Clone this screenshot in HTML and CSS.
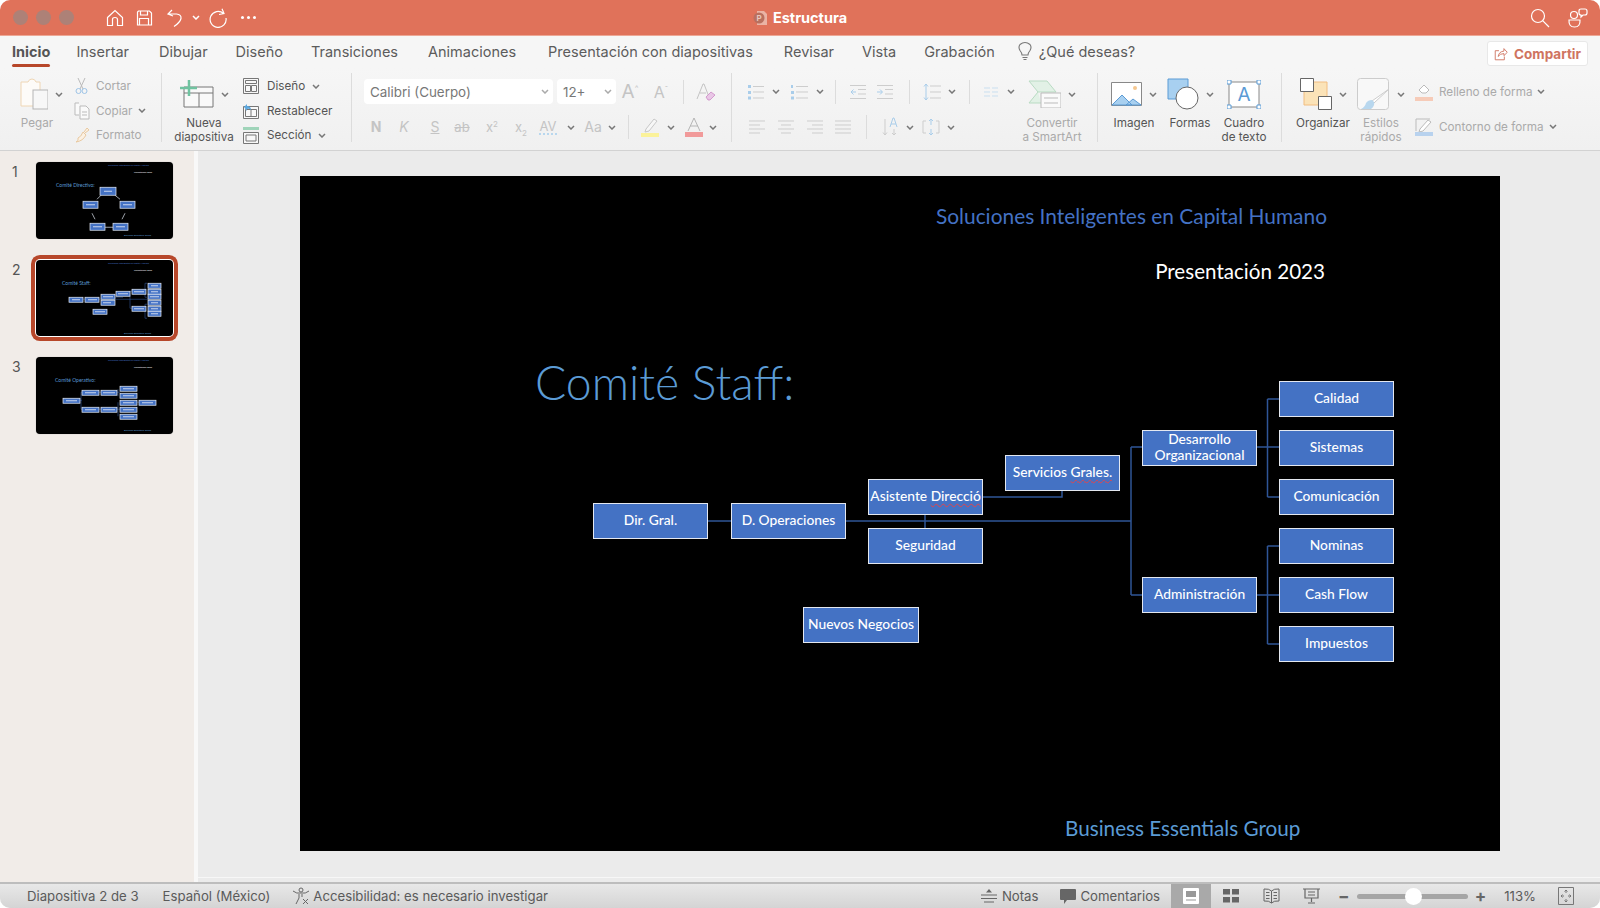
FILE: index.html
```html
<!DOCTYPE html>
<html lang="es">
<head>
    <meta charset="UTF-8">
    <title>Estructura</title>
    <link rel="stylesheet" href="styles.css">
</head>
<body>
<svg class="defs" width="0" height="0">
    <symbol id="chev" viewBox="0 0 8 5"><path d="M1 1l3 3 3-3" fill="none" stroke="currentColor" stroke-width="1.5"/></symbol>
</svg>
<div class="app">

    <!-- title bar -->
    <header class="titlebar">
        <div class="title-left">
            <div class="lights"><i></i><i></i><i></i></div>
            <svg class="qat q-home" width="20" height="20" viewBox="0 0 20 20"><path d="M2.5 9.5L10 2.5l7.500 7v8h-5v-6q0-2-2.500-2t-2.500 2v6h-5z"/></svg>
            <svg class="qat q-save" width="18" height="18" viewBox="0 0 18 18"><path d="M3.500 2h11l2 2v12h-14V3zM5.500 2v4h7V2M4.500 16v-6.500h9V16"/></svg>
            <svg class="qat q-undo" width="20" height="20" viewBox="0 0 20 20"><path d="M7 2L3 6l5 2M3.500 6h8q5 .5 4.500 4.500-1 4-7 8"/></svg>
            <svg class="chev q-chev"><use href="#chev"/></svg>
            <svg class="qat q-redo" width="20" height="20" viewBox="0 0 20 20"><path d="M15.500 5.500A8 8 0 1 0 18 10M14 .8l2 4.700-5 1"/></svg>
            <div class="q-more"><i></i><i></i><i></i></div>
        </div>
        <div class="doc-title">
            <svg width="15" height="16" viewBox="0 0 15 16"><path d="M4 1h7l3 3v11H4z" fill="#eab3a4"/><circle cx="6" cy="8" r="5.500" fill="#b9705f"/><text x="3.500" y="11" class="doc-p">P</text></svg>
            <span>Estructura</span>
        </div>
        <div class="title-right">
            <svg class="qat" width="20" height="20" viewBox="0 0 20 20"><circle cx="8" cy="8" r="6.500"/><path d="M12.700 12.700L19 19"/></svg>
            <svg class="qat q-people" width="20" height="20" viewBox="0 0 20 20"><circle cx="6" cy="7" r="3.500"/><path d="M1 12h11q.5 7-5.500 7T1 12zM11 3q0-2 2-2h4q2 0 2 2v2q0 2-2 2h-2l-2 2V7q-2 0-2-2z"/></svg>
        </div>
    </header>

    <!-- tabs -->
    <nav class="tabs">
        <span class="tab tab-active">Inicio</span>
        <span class="tab">Insertar</span>
        <span class="tab tab-dib">Dibujar</span>
        <span class="tab">Diseño</span>
        <span class="tab">Transiciones</span>
        <span class="tab tab-anim">Animaciones</span>
        <span class="tab tab-pres">Presentación con diapositivas</span>
        <span class="tab tab-rev">Revisar</span>
        <span class="tab">Vista</span>
        <span class="tab">Grabación</span>
        <svg class="bulb" width="16" height="20" viewBox="0 0 16 20"><path d="M5 14q0-2-2-4.500Q1 6 3 3.500q5-4 10 0 2 2.500 0 6-2 2.500-2 4.500zM5.500 16.500h5M6.500 18.500h3" fill="none" stroke="#777" stroke-width="1.100"/></svg>
        <span class="tab tab-help">¿Qué deseas?</span>
        <button class="share">
            <svg width="17" height="16" viewBox="0 0 17 16"><path d="M6 4H1.500v11h11v-4M5 11q1-6 7-6.500V1.500L16 6l-4 4V7.500q-5 0-7 3.500z" fill="none" stroke="#cf7460" stroke-width="1.100"/></svg>
            Compartir
        </button>
    </nav>

    <!-- ribbon -->
    <section class="ribbon">
        <div class="group g-clip">
            <div class="big big-paste off">
                <div class="big-ico">
                    <svg width="28" height="32" viewBox="0 0 28 32"><path d="M5 4h3q1-3 4-3t4 3h4v24H1V4z" fill="#fdfbf8" stroke="#efd6b4"/><rect x="13" y="12" width="15" height="19" fill="#f7f7f7" stroke="#b5b5b5"/></svg>
                    <svg class="chev"><use href="#chev"/></svg>
                </div>
                <span class="big-label">Pegar</span>
            </div>
            <div class="tools off">
                <div class="tool">
                    <svg width="16" height="18" viewBox="0 0 16 18"><path d="M4 1l5 11M11 1L6 12" fill="none" stroke="#bbb"/><circle cx="4.500" cy="14" r="2.500" fill="none" stroke="#9dc3e6"/><circle cx="10.500" cy="14" r="2.500" fill="none" stroke="#9dc3e6"/></svg>
                    Cortar
                </div>
                <div class="tool">
                    <svg width="16" height="18" viewBox="0 0 16 18"><path d="M5 1H1v12h4M6 4h6l3 3v10H6zM8 10h5M8 13h5" fill="#fafafa" stroke="#bbb"/></svg>
                    Copiar <svg class="chev"><use href="#chev"/></svg>
                </div>
                <div class="tool">
                    <svg width="16" height="18" viewBox="0 0 16 18"><path d="M10 6l3-4 2 2-4 3M9 6l3 3q-3 6-10 7 3-1 2-4 3-1 5-6z" fill="#fbf1e4" stroke="#e9c9a0"/></svg>
                    Formato
                </div>
            </div>
        </div>

        <div class="group g-slides">
            <div class="big big-new">
                <div class="big-ico">
                    <svg width="34" height="28" viewBox="0 0 34 28"><path d="M4 7h29v20H4zM4 13h29M19 13v14" fill="#f9f9f9" stroke="#777"/><path d="M9 0v16M0 8h17" stroke="#6fc3a0" stroke-width="2.500"/></svg>
                    <svg class="chev"><use href="#chev"/></svg>
                </div>
                <span class="big-label">Nueva diapositiva</span>
            </div>
            <div class="tools tools-slide">
                <div class="tool">
                    <svg width="16" height="16" viewBox="0 0 16 16"><path d="M.5.500h15v15H.5zM2.500 2.500h11v3h-11zM2.500 7.500h5v6h-5zM8.500 7.500h5v6h-5z" fill="#f8f8f8" stroke="#777"/></svg>
                    Diseño <svg class="chev"><use href="#chev"/></svg>
                </div>
                <div class="tool">
                    <svg width="16" height="16" viewBox="0 0 16 16"><path d="M.5 3.500h15v12H.5zM2.500 6.500h11v7h-11zM8 6.500v7" fill="#f8f8f8" stroke="#777"/><path d="M1 4l3-3v2q4 0 4 4-2-2-4-1v2z" fill="#5ba7de"/></svg>
                    Restablecer
                </div>
                <div class="tool">
                    <svg width="16" height="18" viewBox="0 0 16 18"><path d="M0 1h16v3H0z" fill="#9fd4b9"/><path d="M.5 6.500h15v11H.5zM3 9h10v6H3z" fill="#f8f8f8" stroke="#777"/></svg>
                    Sección <svg class="chev"><use href="#chev"/></svg>
                </div>
            </div>
        </div>

        <div class="group g-font off">
            <div class="font-row1">
                <div class="field field-font">Calibri (Cuerpo)<svg class="chev"><use href="#chev"/></svg></div>
                <span></span>
                <div class="field field-size">12+<svg class="chev"><use href="#chev"/></svg></div>
                <span class="glyph g-a1">A<sup>^</sup></span>
                <span class="glyph g-a2">A<sup>ˇ</sup></span>
                <i class="vsep"></i>
                <svg width="20" height="20" viewBox="0 0 20 20"><path d="M1 17L7 2h1l5 13M4 11h6" fill="none" stroke="#c4c4c4"/><path d="M10 15l5-5 4 3-5 5h-2z" fill="#e9c6e6" stroke="#c77fc0" stroke-width=".7"/></svg>
            </div>
            <div class="font-row2">
                <b class="glyph">N</b>
                <em class="glyph">K</em>
                <u class="glyph">S</u>
                <s class="glyph g-sm">ab</s>
                <span class="glyph g-sm">x<sup>2</sup></span>
                <span class="glyph g-sm">x<sub>2</sub></span>
                <span class="glyph g-av">AV</span>
                <svg class="chev"><use href="#chev"/></svg>
                <span class="glyph">Aa</span>
                <svg class="chev"><use href="#chev"/></svg>
                <i class="vsep"></i>
                <svg width="20" height="20" viewBox="0 0 20 20"><path d="M6 12L14 2l3 2-8 10-4 1z" fill="#f7f7f7" stroke="#c8c8c8"/><path d="M1 16h18v4H1z" fill="#fbf29a"/></svg>
                <svg class="chev"><use href="#chev"/></svg>
                <svg width="18" height="20" viewBox="0 0 18 20"><path d="M3 14L9 1l6 13M5 9h8" fill="none" stroke="#b5b5b5"/><path d="M0 15h18v5H0z" fill="#f19a9a"/></svg>
                <svg class="chev"><use href="#chev"/></svg>
            </div>
        </div>

        <div class="group g-para off">
            <div class="para-rows">
                <div class="para-row1">
                    <svg class="ln" width="16" height="16" viewBox="0 0 16 16"><path class="ac" d="M0 1h3v3H0zM0 7h3v3H0zM0 12.500h3v3H0z"/><path d="M5 2.500h11M5 8h11M5 14h11"/></svg>
                    <svg class="chev"><use href="#chev"/></svg>
                    <svg class="ln" width="18" height="16" viewBox="0 0 18 16"><path class="ac" d="M1 1h2v3H1zM1 7h3v3H1zM1 12.500h3v3H1z"/><path d="M6 2.500h12M6 8h12M6 14h12"/></svg>
                    <svg class="chev"><use href="#chev"/></svg>
                    <i class="vsep"></i>
                    <svg class="ln" width="16" height="16" viewBox="0 0 16 16"><path d="M0 1.500h16M8 5.500h8M8 10h8M0 14.500h16"/><path class="al" d="M6 8H1M3.500 5.500L1 8l2.500 2.500"/></svg>
                    <svg class="ln" width="16" height="16" viewBox="0 0 16 16"><path d="M0 1.500h16M8 5.500h8M8 10h8M0 14.500h16"/><path class="al" d="M0 8h5M3 5.500L5.500 8 3 10.500"/></svg>
                    <i class="vsep"></i>
                    <svg class="ln" width="18" height="18" viewBox="0 0 18 18"><path d="M7 3h11M7 9h11M7 15h11"/><path class="al" d="M3 1v16M1 3.500L3 1l2 2.500M1 14.500L3 17l2-2.500"/></svg>
                    <svg class="chev"><use href="#chev"/></svg>
                    <i class="vsep"></i>
                    <svg class="ln ln-blue" width="14" height="12" viewBox="0 0 14 12"><path d="M0 2h6M0 6h6M0 10h6M8 2h6M8 6h6M8 10h6"/></svg>
                    <svg class="chev"><use href="#chev"/></svg>
                </div>
                <div class="para-row2">
                    <svg class="ln" width="16" height="14" viewBox="0 0 16 14"><path d="M0 1h16M0 5h11M0 9h16M0 13h11"/></svg>
                    <svg class="ln" width="16" height="14" viewBox="0 0 16 14"><path d="M0 1h16M3 5h10M0 9h16M3 13h10"/></svg>
                    <svg class="ln" width="16" height="14" viewBox="0 0 16 14"><path d="M0 1h16M5 5h11M0 9h16M5 13h11"/></svg>
                    <svg class="ln" width="16" height="14" viewBox="0 0 16 14"><path d="M0 1h16M0 5h16M0 9h16M0 13h16"/></svg>
                    <i class="vsep"></i>
                    <svg class="ln" width="16" height="20" viewBox="0 0 16 20"><path d="M3 2v16M1 15.500L3 18l2-2.500M12 12v6M10 16l2 2 2-2"/><path class="al" d="M8 10l3-9h1l3 9M9 7h5"/></svg>
                    <svg class="chev"><use href="#chev"/></svg>
                    <svg class="ln" width="18" height="18" viewBox="0 0 18 18"><path d="M4 3H1v12h3M14 3h3v12h-3"/><path class="al" d="M9 1v6M7 3l2-2 2 2M9 11v6M7 15l2 2 2-2"/></svg>
                    <svg class="chev"><use href="#chev"/></svg>
                </div>
            </div>
            <div class="big big-smart">
                <div class="big-ico">
                    <svg width="33" height="28" viewBox="0 0 33 28"><path d="M1 1h18l9 11H10z" fill="#e2f1e6" stroke="#b9dbc3"/><path d="M10 12l-9 11h12" fill="#e2f1e6" stroke="#b9dbc3"/><path d="M13 13h20v15H13zM16 18h14M16 23h14" fill="#fafafa" stroke="#bbb"/></svg>
                    <svg class="chev"><use href="#chev"/></svg>
                </div>
                <span class="big-label">Convertir<br>a SmartArt</span>
            </div>
        </div>

        <div class="group g-insert">
            <div class="big big-img">
                <div class="big-ico">
                    <svg width="31" height="24" viewBox="0 0 31 24"><path d="M.5.500h30v23H.5z" fill="#fff" stroke="#888"/><path d="M1 23l10-10 10 10zM15 23l7-6 8 6z" fill="#a8d0f0" stroke="#5b9bd5"/><circle cx="24" cy="6" r="2" fill="#f5c78f"/></svg>
                    <svg class="chev"><use href="#chev"/></svg>
                </div>
                <span class="big-label">Imagen</span>
            </div>
            <div class="big big-shape">
                <div class="big-ico">
                    <svg width="32" height="32" viewBox="0 0 32 32"><path d="M1 1h20v20H1z" fill="#a8d0f0" stroke="#5b9bd5"/><circle cx="20" cy="20" r="11" fill="#fff" stroke="#666"/></svg>
                    <svg class="chev"><use href="#chev"/></svg>
                </div>
                <span class="big-label">Formas</span>
            </div>
            <div class="big big-text">
                <div class="big-ico">
                    <svg width="34" height="29" viewBox="0 0 34 29"><path d="M2 2h30v25H2z" fill="#fff" stroke="#888"/><text x="17" y="21" class="box-a">A</text><path d="M0 0h4v4H0zM30 0h4v4h-4zM0 25h4v4H0zM30 25h4v4h-4z" fill="#fff" stroke="#5b9bd5"/></svg>
                </div>
                <span class="big-label">Cuadro<br>de texto</span>
            </div>
        </div>

        <div class="group g-draw">
            <div class="big big-org">
                <div class="big-ico">
                    <svg width="32" height="32" viewBox="0 0 32 32"><path d="M4 4h23v23H4z" fill="#fbe3b8" stroke="#f2bd80"/><path d="M.5.500h13v13H.5zM18.500 18.500h13v13h-13z" fill="#fff" stroke="#666"/></svg>
                    <svg class="chev"><use href="#chev"/></svg>
                </div>
                <span class="big-label">Organizar</span>
            </div>
            <div class="big big-style off">
                <div class="big-ico">
                    <svg width="33" height="32" viewBox="0 0 33 32"><rect x=".5" y=".5" width="31" height="31" rx="3" fill="#f8f8f8" stroke="#ccc"/><path d="M32 11L17 25l-2-2z" fill="#fff" stroke="#ccc"/><path d="M15 22q-4 0-6 3-1 4-5 6h10q4-3 3-7z" fill="#b8d7ee"/></svg>
                    <svg class="chev"><use href="#chev"/></svg>
                </div>
                <span class="big-label">Estilos<br>rápidos</span>
            </div>
            <div class="tools tools-shape off">
                <div class="tool">
                    <svg width="18" height="18" viewBox="0 0 18 18"><path d="M4 7l5-5 5 5-3 3H7z" fill="#fff" stroke="#bbb"/><path d="M0 14h18v4H0z" fill="#f6cbb8"/></svg>
                    Relleno de forma <svg class="chev"><use href="#chev"/></svg>
                </div>
                <div class="tool">
                    <svg width="18" height="18" viewBox="0 0 18 18"><path d="M1 13V1h14" fill="none" stroke="#bbb"/><path d="M5 11l8-9 3 2-8 9-4 1z" fill="#fff" stroke="#bbb"/><path d="M0 14h18v4H0z" fill="#b8d2ee"/></svg>
                    Contorno de forma <svg class="chev"><use href="#chev"/></svg>
                </div>
            </div>
        </div>
    </section>

    <div class="workspace">
        <!-- slide list -->
        <aside class="slide-list">
            <div class="thumb-row">
                <span class="thumb-num">1</span>
                <svg class="thumb" viewBox="0 0 137 76">
                    <text x="72" y="4" class="t-head">Soluciones Inteligentes en Capital Humano</text>
                    <text x="98" y="11" class="t-year">Presentación 2023</text>
                    <text x="20" y="25" class="t-title">Comité Directivo:</text>
                    <path d="M61 37l4-4M79 33l5 4M56 51l3 6M89 51l-3 6M69 65h8" class="t-line"/>
                    <rect x="64" y="25" width="16" height="8" class="t-box"/>
                    <rect x="47" y="39" width="15" height="7" class="t-box"/>
                    <rect x="84" y="39" width="15" height="7" class="t-box"/>
                    <rect x="54" y="61" width="15" height="7" class="t-box"/>
                    <rect x="77" y="61" width="15" height="7" class="t-box"/>
                    <path d="M68 29h8M50 42.500h9M87 42.500h9M57 64.500h9M80 64.500h9" class="t-txt"/>
                    <text x="88" y="74" class="t-foot">Business Essentials Group</text>
                </svg>
            </div>
            <div class="thumb-row">
                <span class="thumb-num">2</span>
                <svg class="thumb thumb-on" viewBox="0 0 137 76">
                    <text x="72" y="4" class="t-head">Soluciones Inteligentes en Capital Humano</text>
                    <text x="98" y="11" class="t-year">Presentación 2023</text>
                    <text x="26" y="25" class="t-title">Comité Staff:</text>
                    <path d="M46 39h66M94 31v17M94 31h2M94 48h2M109 23v14M109 44v14M109 23h2M109 37h2M109 44h2M109 58h2M78 37h9" class="t-dark"/>
                    <rect x="33" y="37" width="14" height="5" class="t-box"/>
                    <rect x="49" y="37" width="14" height="5" class="t-box"/>
                    <rect x="65" y="34" width="14" height="5" class="t-box"/>
                    <rect x="65" y="40" width="14" height="5" class="t-box"/>
                    <rect x="57" y="49" width="14" height="5" class="t-box"/>
                    <rect x="80" y="31" width="14" height="5" class="t-box"/>
                    <rect x="96" y="29" width="14" height="5" class="t-box"/>
                    <rect x="96" y="46" width="14" height="5" class="t-box"/>
                    <rect x="112" y="23" width="13" height="5" class="t-box"/>
                    <rect x="112" y="29" width="13" height="5" class="t-box"/>
                    <rect x="112" y="34" width="13" height="5" class="t-box"/>
                    <rect x="112" y="40" width="13" height="5" class="t-box"/>
                    <rect x="112" y="46" width="13" height="5" class="t-box"/>
                    <rect x="112" y="51" width="13" height="5" class="t-box"/>
                    <path d="M36 39.500h8M52 39.500h9M67 36.500h10M67 42.500h8M59 51.500h10M82 33.500h10M98 31.500h10M98 48.500h10M115 25.500h7M115 31.500h7M114 36.500h9M115 42.500h7M115 48.500h7M115 53.500h7" class="t-txt"/>
                    <text x="88" y="74" class="t-foot">Business Essentials Group</text>
                </svg>
            </div>
            <div class="thumb-row">
                <span class="thumb-num">3</span>
                <svg class="thumb" viewBox="0 0 137 76">
                    <text x="72" y="4" class="t-head">Soluciones Inteligentes en Capital Humano</text>
                    <text x="98" y="11" class="t-year">Presentación 2023</text>
                    <text x="19" y="25" class="t-title">Comité Operativo:</text>
                    <path d="M44 43h2M45 35v17M45 35h1M45 52h1M63 35h2M63 52h2M81 35h3M82 32v7M82 45v14M81 52h3M101 45h2" class="t-dark"/>
                    <rect x="27" y="41" width="17" height="5" class="t-box"/>
                    <rect x="46" y="33" width="17" height="5" class="t-box"/>
                    <rect x="65" y="33" width="16" height="5" class="t-box"/>
                    <rect x="84" y="29" width="17" height="5" class="t-box"/>
                    <rect x="84" y="36" width="17" height="5" class="t-box"/>
                    <rect x="46" y="50" width="17" height="5" class="t-box"/>
                    <rect x="65" y="50" width="16" height="5" class="t-box"/>
                    <rect x="84" y="43" width="17" height="5" class="t-box"/>
                    <rect x="84" y="50" width="17" height="5" class="t-box"/>
                    <rect x="84" y="57" width="17" height="5" class="t-box"/>
                    <rect x="103" y="43" width="17" height="5" class="t-box"/>
                    <path d="M30 43.500h11M49 35.500h11M67 35.500h12M87 31.500h11M87 38.500h11M49 52.500h11M67 52.500h12M87 45.500h11M87 52.500h11M87 59.500h11M106 45.500h11" class="t-txt"/>
                    <text x="88" y="74" class="t-foot">Business Essentials Group</text>
                </svg>
            </div>
        </aside>

        <!-- current slide -->
        <main class="canvas">
            <div class="slide">
                <svg class="wires" viewBox="0 0 1200 675">
                    <path d="M408 345h23M546 345h285M625 339v13M831 271v148M831 271h11M831 419h11M683 321h79v-6"/>
                    <path d="M957 271h22M967.500 223v98M967.500 223H979M967.500 321H979"/>
                    <path d="M957 419h22M967.500 370v98M967.500 370H979M967.500 468H979"/>
                </svg>
                <div class="sl-head">Soluciones Inteligentes en Capital Humano</div>
                <div class="sl-year">Presentación 2023</div>
                <div class="sl-title">Comité Staff:</div>
                <div class="sl-foot">Business Essentials Group</div>

                <div class="node n-dir">Dir. Gral.</div>
                <div class="node n-ops">D. Operaciones</div>
                <div class="node n-asis"><span>Asistente <span class="typo">Direcció</span></span></div>
                <div class="node n-seg">Seguridad</div>
                <div class="node n-nue">Nuevos Negocios</div>
                <div class="node n-ser"><span>Servicios <span class="typo">Grales.</span></span></div>
                <div class="node n-des">Desarrollo Organizacional</div>
                <div class="node n-adm">Administración</div>
                <div class="node n-cal">Calidad</div>
                <div class="node n-sis">Sistemas</div>
                <div class="node n-com">Comunicación</div>
                <div class="node n-nom">Nominas</div>
                <div class="node n-cas">Cash Flow</div>
                <div class="node n-imp">Impuestos</div>
            </div>
            <div class="canvas-foot"></div>
        </main>
    </div>

    <!-- status bar -->
    <footer class="statusbar">
        <span class="st-slide">Diapositiva 2 de 3</span>
        <span class="st-lang">Español (México)</span>
        <svg class="st-acc" width="18" height="18" viewBox="0 0 18 18"><circle cx="9" cy="3" r="2" fill="none" stroke="#666"/><path d="M1 4q4 3 7 2h2q3 1 7-2M7 7v4l-3 6M10 7v3" fill="none" stroke="#666"/><path d="M11 12l5 5M16 12l-5 5" stroke="#666"/></svg>
        <span>Accesibilidad: es necesario investigar</span>
        <div class="st-right">
            <svg class="st-notes" width="16" height="14" viewBox="0 0 16 14"><path d="M0 6h16M0 9.500h16M3 13h10" stroke="#666" fill="none"/><path d="M8 0l3 3.500H5z" fill="#666"/></svg>
            <span>Notas</span>
            <svg class="st-comm" width="16" height="15" viewBox="0 0 16 15"><path d="M1 0h14q1 0 1 1v9q0 1-1 1H7l-3 4v-4H1q-1 0-1-1V1q0-1 1-1z" fill="#666"/></svg>
            <span>Comentarios</span>
            <div class="view view-on">
                <svg width="16" height="16" viewBox="0 0 16 16"><rect width="16" height="16" rx="1" fill="#fff"/><path d="M3 3h10v6H3z" fill="#999"/><path d="M3 12h10" stroke="#999"/></svg>
            </div>
            <div class="view">
                <svg width="16" height="14" viewBox="0 0 16 14"><path d="M0 0h7v5.500H0zM9 0h7v5.500H9zM0 8h7v5.500H0zM9 8h7v5.500H9z" fill="#666"/></svg>
            </div>
            <div class="view">
                <svg width="17" height="16" viewBox="0 0 17 16"><path d="M8.500 3Q6 .5 1 1v12q5-.5 7.500 2 2.500-2.500 7.500-2V1q-5-.5-7.500 2zM8.500 3v12M3 4.500h3.500M3 7.500h3.500M3 10.500h3.500M10.500 4.500H14M10.500 7.500H14M10.500 10.500H14" fill="none" stroke="#666"/></svg>
            </div>
            <div class="view">
                <svg width="17" height="16" viewBox="0 0 17 16"><path d="M0 1h17M2 1v9h13V1M8.500 10v4M5 15h7M5 4h7M5 7h7" fill="none" stroke="#666" stroke-width="1.200"/></svg>
            </div>
            <div class="zoom">
                <span class="z-sign">−</span>
                <div class="z-track"><i></i></div>
                <span class="z-sign">+</span>
            </div>
            <span class="st-pct">113%</span>
            <svg class="st-fit" width="16" height="18" viewBox="0 0 16 18"><path d="M.5.500h15v17H.5z" fill="none" stroke="#777"/><path d="M8 3v3M6.500 4.500L8 3l1.500 1.500M8 15v-3M6.500 13.500L8 15l1.500-1.500M3 9h3M4.500 7.500L3 9l1.500 1.500M13 9h-3M11.500 7.500L13 9l-1.500 1.500" fill="none" stroke="#777"/></svg>
        </div>
    </footer>
</div>
</body>
</html>
```
FILE: styles.css
```css
* {
    box-sizing: border-box;
}
html, body {
    margin: 0;
    height: 100%;
    background: #fff;
}
body {
    overflow: hidden;
    font-family: Inter, "Liberation Sans", sans-serif;
    color: #555;
}
.defs {
    position: absolute;
}
.app {
    width: 1600px;
    height: 908px;
    display: flex;
    flex-direction: column;
    border-radius: 10px;
    overflow: hidden;
    background: #f5f5f5;
}
.chev {
    width: 8px;
    height: 5px;
    color: #777;
    flex: none;
}

/* title bar */
.titlebar {
    height: 36px;
    flex: none;
    display: grid;
    grid-template-columns: 1fr auto 1fr;
    align-items: center;
    background: #e0725a;
    border-bottom: 1px solid #eda896;
}
.title-left {
    display: flex;
    align-items: center;
    padding-left: 13px;
}
.lights {
    display: flex;
    gap: 8px;
    margin-right: 31px;
}
.lights i {
    width: 15px;
    height: 15px;
    border-radius: 50%;
    background: #ad8177;
}
.qat {
    fill: none;
    stroke: #fff;
    stroke-width: 1.2;
    flex: none;
}
.q-save {
    margin-left: 10px;
}
.q-undo {
    margin-left: 12px;
}
.q-chev {
    margin-left: 7px;
    color: #fff;
}
.q-redo {
    margin-left: 8px;
}
.q-more {
    display: flex;
    gap: 3px;
    margin-left: 13px;
}
.q-more i {
    width: 3px;
    height: 3px;
    border-radius: 50%;
    background: #fff;
}
.doc-title {
    display: flex;
    align-items: center;
    gap: 5px;
    font-size: 14.500px;
    font-weight: 700;
    color: #fff;
}
.doc-p {
    font-size: 8px;
    font-weight: 700;
    fill: #e8c6bc;
}
.title-right {
    display: flex;
    justify-content: flex-end;
    gap: 18px;
    padding-right: 12px;
}

/* tabs */
.tabs {
    height: 32px;
    flex: none;
    display: flex;
    align-items: center;
    gap: 28px;
    padding: 0 12px 2px;
    background: #f6f6f6;
    font-size: 14.500px;
}
.tab {
    position: relative;
    color: #5c5c5c;
    white-space: nowrap;
}
.tab-active {
    font-weight: 700;
    color: #555;
    margin-right: -2px;
}
.tab-active::after {
    content: "";
    position: absolute;
    left: 0;
    right: 0;
    bottom: -7px;
    height: 3px;
    border-radius: 2px;
    background: #b7472a;
}
.tab-dib {
    margin-left: 2px;
}
.tab-anim {
    margin-left: 2px;
}
.tab-pres {
    margin-left: 4px;
}
.tab-rev {
    margin-left: 3px;
}
.bulb {
    margin-left: -6px;
    flex: none;
}
.tab-help {
    margin-left: -22px;
}
.share {
    margin-left: auto;
    width: 101px;
    height: 25px;
    margin-top: 5px;
    display: flex;
    align-items: center;
    justify-content: center;
    gap: 6px;
    background: #fff;
    border: 1px solid #e8e8e8;
    border-radius: 3px;
    font: 700 13.500px Inter, "Liberation Sans", sans-serif;
    color: #cf7460;
}

/* ribbon */
.ribbon {
    height: 83px;
    flex: none;
    display: flex;
    align-items: flex-start;
    padding-top: 5px;
    background: linear-gradient(#f6f6f6, #f0f0f0);
    border-bottom: 1px solid #d2d2d2;
    font-size: 11.700px;
}
.group {
    height: 69px;
    flex: none;
    display: flex;
    border-right: 1px solid #dcdcdc;
}
.off {
    color: #aaa;
}
.big {
    display: flex;
    flex-direction: column;
    align-items: center;
    flex: none;
}
.big-ico {
    height: 42px;
    flex: none;
    display: flex;
    align-items: center;
    gap: 7px;
}
.big-label {
    flex: none;
    line-height: 13.500px;
    text-align: center;
    margin-top: 2px;
}
.big-paste {
    width: 74px;
    padding-left: 20px;
    align-items: flex-start;
}
.big-paste .big-label {
    width: 34px;
}
.tools {
    display: flex;
    flex-direction: column;
    padding-top: 1px;
}
.tool {
    height: 24.500px;
    flex: none;
    display: flex;
    align-items: center;
    gap: 6px;
    white-space: nowrap;
}
.tool svg:first-child {
    flex: none;
}
.tool .chev {
    margin-left: -1px;
}
.tools-slide .tool {
    gap: 8px;
}
.g-clip {
    width: 162px;
}
.g-slides {
    width: 190px;
    padding-left: 10px;
}
.big-new {
    width: 64px;
    margin-right: 7px;
}
.big-new .big-label {
    width: 70px;
}
.g-font {
    width: 380px;
    padding-left: 12px;
    display: block;
}
.font-row1 {
    display: grid;
    grid-template-columns: 189px 4px 59px 28px 34px 10px 36px;
    justify-items: center;
    align-items: center;
    margin-top: 6px;
    height: 25px;
}
.font-row2 {
    display: grid;
    grid-template-columns: 24px 32px 30px 24px 36px 22px 32px 14px 30px 8px 24px 20px 22px 24px 14px;
    justify-items: center;
    align-items: center;
    margin-top: 11px;
    height: 24px;
}
.field {
    height: 25px;
    display: flex;
    align-items: center;
    justify-content: space-between;
    padding: 0 4px 0 6px;
    background: #fff;
    border-radius: 4px;
    font-size: 13.400px;
    color: #777;
}
.field .chev {
    color: #aaa;
}
.field-font {
    width: 189px;
}
.field-size {
    width: 59px;
}
.glyph {
    font-size: 14px;
    color: #c4c4c4;
    font-style: normal;
    font-weight: 400;
    text-decoration: none;
    line-height: 1;
}
b.glyph {
    font-weight: 700;
}
em.glyph {
    font-style: italic;
}
u.glyph {
    text-decoration: underline;
}
s.glyph {
    text-decoration: line-through;
}
.g-a1, .g-a2 {
    font-size: 19px;
}
.g-a2 {
    font-size: 16px;
}
.glyph sup, .glyph sub {
    font-size: 8px;
    line-height: 0;
}
.g-sm {
    font-size: 13px;
}
.g-av {
    font-size: 13px;
    border-bottom: 2px dotted #b8d7ee;
}
.vsep {
    width: 1px;
    height: 24px;
    background: #dcdcdc;
}
.ln {
    fill: none;
    stroke: #cdcdcd;
    stroke-width: 1;
}
.ln .ac {
    fill: #a9cdea;
    stroke: none;
}
.ln .al {
    stroke: #a9cdea;
}
.ln-blue {
    stroke: #c9dff0;
}
.g-para {
    width: 366px;
    padding-left: 8px;
}
.para-rows {
    width: 282px;
    flex: none;
}
.para-row1 {
    display: grid;
    grid-template-columns: 32px 8px 38px 4px 26px 20px 34px 14px 32px 8px 26px 18px 22px;
    justify-items: center;
    align-items: center;
    height: 25px;
    margin-top: 6px;
}
.para-row2 {
    display: grid;
    grid-template-columns: 34px 24px 34px 22px 24px 24px 16px 26px 14px;
    justify-items: center;
    align-items: center;
    height: 24px;
    margin-top: 11px;
}
.big-smart {
    width: 60px;
}
.g-insert {
    width: 184px;
    padding-left: 8px;
}
.big-img, .big-shape {
    width: 56px;
}
.big-text {
    width: 52px;
}
.box-a {
    font-size: 19px;
    fill: #5b9bd5;
    text-anchor: middle;
}
.g-draw {
    padding-left: 13px;
    border-right: 0;
}
.big-org {
    width: 56px;
}
.big-style {
    width: 60px;
}
.tools-shape {
    margin-left: 4px;
}
.tools-shape .tool {
    height: 35px;
}

/* workspace */
.workspace {
    flex: 1;
    min-height: 0;
    display: flex;
}
.slide-list {
    width: 198px;
    flex: none;
    padding-top: 11px;
    display: flex;
    flex-direction: column;
    gap: 21px;
    background: #f1ece8;
    border-right: 4px solid #f8f8f8;
}
.thumb-row {
    display: flex;
    align-items: flex-start;
    padding-left: 12px;
}
.thumb-num {
    width: 23.500px;
    font-size: 14px;
    color: #555;
    padding-top: 1px;
}
.thumb {
    width: 137px;
    height: 76.500px;
    background: #000;
    border-radius: 4px;
    box-shadow: 0 0 1px #999;
}
.thumb-on {
    box-shadow: 0 0 0 1px #fff, 0 0 0 5px #b7472a;
}
.t-head {
    font: 2.200px Lato, sans-serif;
    fill: #4472c4;
}
.t-year {
    font: 2.200px Lato, sans-serif;
    fill: #fff;
}
.t-foot {
    font: 2.400px Lato, sans-serif;
    fill: #5b9bd5;
}
.t-title {
    font: 5px Lato, sans-serif;
    fill: #5b9bd5;
}
.t-box {
    fill: #4472c4;
    stroke: #e8eef8;
    stroke-width: .7;
}
.t-txt {
    fill: none;
    stroke: #c9d6ee;
    stroke-width: 1;
}
.t-line {
    fill: none;
    stroke: #dfe6f2;
    stroke-width: .7;
}
.t-dark {
    fill: none;
    stroke: #2f5597;
    stroke-width: .6;
}
.canvas {
    flex: 1;
    display: flex;
    flex-direction: column;
    padding: 25px 0 0 102px;
    background: #ebebeb;
}
.canvas-foot {
    margin: auto -100px 0 -102px;
    height: 5px;
    border-top: 1px solid #f7f7f7;
}
.slide {
    position: relative;
    width: 1200px;
    height: 675px;
    flex: none;
    background: #000;
    font-family: Lato, "Open Sans", sans-serif;
}
.wires {
    position: absolute;
    inset: 0;
    fill: none;
    stroke: #2f5597;
    stroke-width: 1.500;
}
.sl-head, .sl-year, .sl-title, .sl-foot {
    position: absolute;
    white-space: nowrap;
    line-height: 1;
}
.sl-head {
    top: 30px;
    right: 173px;
    font-size: 20.900px;
    color: #4472c4;
}
.sl-year {
    top: 85px;
    right: 175px;
    font-size: 20.600px;
    color: #fff;
}
.sl-title {
    top: 183px;
    left: 235px;
    font-size: 46.300px;
    font-weight: 300;
    color: #5b9bd5;
}
.sl-foot {
    top: 642px;
    left: 765px;
    font-size: 20.700px;
    color: #5b9bd5;
}

/* org chart boxes */
.node {
    position: absolute;
    width: 115px;
    height: 36px;
    display: flex;
    align-items: center;
    justify-content: center;
    padding-bottom: 2px;
    text-align: center;
    background: #4472c4;
    border: 1.500px solid #e4e8f0;
    color: #fff;
    font-size: 13.800px;
    font-weight: 500;
    line-height: 16px;
    white-space: nowrap;
}
.typo {
    text-decoration: underline wavy #e0444c 1px;
    text-underline-offset: 2px;
}
.n-dir { left: 293px; top: 327px; }
.n-ops { left: 431px; top: 327px; }
.n-asis { left: 568px; top: 303px; }
.n-seg { left: 568px; top: 352px; }
.n-nue { left: 503px; top: 431px; width: 116px; }
.n-ser { left: 705px; top: 279px; }
.n-des { left: 842px; top: 254px; white-space: normal; }
.n-adm { left: 842px; top: 401px; }
.n-cal { left: 979px; top: 205px; }
.n-sis { left: 979px; top: 254px; }
.n-com { left: 979px; top: 303px; }
.n-nom { left: 979px; top: 352px; }
.n-cas { left: 979px; top: 401px; }
.n-imp { left: 979px; top: 450px; }

/* status bar */
.statusbar {
    height: 26px;
    flex: none;
    display: flex;
    align-items: center;
    padding-left: 27px;
    background: linear-gradient(#e8e8e8, #d4d4d4);
    border-top: 2px solid #bdbdbd;
    font-size: 13.200px;
    color: #5a5a5a;
}
.st-lang {
    margin-left: 24px;
}
.st-acc {
    margin: 0 3px 0 22px;
}
.st-right {
    margin-left: auto;
    height: 100%;
    display: flex;
    align-items: center;
}
.st-notes {
    margin-right: 5px;
}
.st-comm {
    margin: 0 4px 0 22px;
}
.view {
    width: 40px;
    height: 100%;
    display: flex;
    align-items: center;
    justify-content: center;
}
.view-on {
    margin-left: 11px;
    background: #a9a9a9;
}
.zoom {
    display: flex;
    align-items: center;
    gap: 7px;
    margin-left: 7px;
}
.z-sign {
    font-size: 17px;
    font-weight: 700;
    color: #666;
}
.z-track {
    position: relative;
    width: 111px;
    height: 5px;
    border-radius: 3px;
    background: #a5a5a5;
}
.z-track i {
    position: absolute;
    left: 48px;
    top: -6px;
    width: 17px;
    height: 17px;
    border-radius: 50%;
    background: #fff;
}
.st-pct {
    margin-left: 18px;
}
.st-fit {
    margin: 0 26px 0 22px;
}
```
